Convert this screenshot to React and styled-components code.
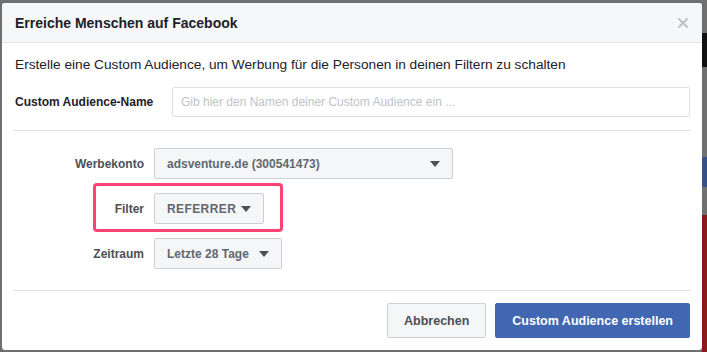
import React from 'react';
import styled, { createGlobalStyle } from 'styled-components';

const GlobalStyle = createGlobalStyle`
  html, body {
    margin: 0;
    padding: 0;
    background: #6f6f6f;
    font-family: "Liberation Sans", Arial, sans-serif;
  }
`;

const Page = styled.div`
  display: flex;
  width: 707px;
  height: 352px;
  overflow: hidden;
`;

const Dialog = styled.div`
  margin: 3px 0 2px 2px;
  width: 700px;
  height: 347px;
  background: #fff;
  border-radius: 3px;
  overflow: hidden;
  display: flex;
  flex-direction: column;
`;

const SideStrip = styled.div`
  flex: 1;
  display: flex;
  flex-direction: column;
`;

const StripBlock = styled.div`
  height: ${(p) => p.h}px;
  background: ${(p) => p.bg};
`;

const Header = styled.div`
  height: 39px;
  background: #f6f7f9;
  border-bottom: 1px solid #e5e5e5;
  display: flex;
  align-items: center;
  justify-content: space-between;
  padding: 0 13px 0 13px;
`;

const Title = styled.h1`
  margin: 0;
  font-size: 14px;
  font-weight: bold;
  color: #1d2129;
`;

const Close = styled.button`
  border: 0;
  background: none;
  padding: 0;
  width: 10px;
  height: 10px;
  display: flex;
  margin-right: 1px;
`;

const Body = styled.div`
  padding: 13px 12px 0 12px;
  flex: 1;
  display: flex;
  flex-direction: column;
`;

const Intro = styled.p`
  margin: 0 0 0 1px;
  font-size: 13.7px;
  line-height: 18px;
  color: #1d2129;
`;

const NameRow = styled.div`
  display: flex;
  align-items: center;
  margin-top: 13px;
  padding-left: 1px;
`;

const NameLabel = styled.label`
  width: 157px;
  font-size: 12px;
  font-weight: bold;
  color: #1d2129;
`;

const NameInput = styled.input`
  flex: 1;
  height: 30px;
  box-sizing: border-box;
  border: 1px solid #dddfe2;
  border-radius: 2px;
  padding: 0 8px;
  font-family: inherit;
  font-size: 12px;
  color: #1d2129;
  &::placeholder {
    color: #bec3c9;
  }
`;

const Divider = styled.hr`
  margin: ${(p) => p.top}px 0 0 0;
  border: 0;
  border-top: 1px solid #dddfe2;
`;

const Fields = styled.div`
  display: flex;
  flex-direction: column;
  align-items: flex-start;
  margin-top: 17px;
`;

const FieldRow = styled.div`
  display: flex;
  align-items: center;
  gap: 10px;
  margin-top: ${(p) => p.top || 0}px;
`;

const Highlight = styled.div`
  display: flex;
  align-items: center;
  gap: 10px;
  margin: 4px 0 0 79px;
  padding: 7px 16px 5px 0;
  border: 3px solid #ff4272;
  border-radius: 4px;
`;

const FieldLabel = styled.label`
  width: ${(p) => p.w}px;
  text-align: right;
  font-size: 12px;
  font-weight: bold;
  color: #4b4f56;
`;

const Select = styled.div`
  width: ${(p) => p.w}px;
  height: 31px;
  box-sizing: border-box;
  display: flex;
  align-items: center;
  justify-content: space-between;
  padding: 0 12px 0 12px;
  background: #f5f6f7;
  border: 1px solid #ccd0d5;
  border-radius: 2px;
  font-size: 12px;
  font-weight: bold;
  color: #606770;
  letter-spacing: ${(p) => (p.caps ? '0.4px' : '0')};
`;

const Caret = styled.span`
  width: 0;
  height: 0;
  border-left: 5px solid transparent;
  border-right: 5px solid transparent;
  border-top: 6px solid #4b4f56;
  margin-top: 1px;
`;

const Footer = styled.div`
  display: flex;
  justify-content: flex-end;
  gap: 9px;
  margin-top: 12px;
`;

const Button = styled.button`
  height: 35px;
  box-sizing: border-box;
  padding: 0 ${(p) => p.pad}px;
  border-radius: 2px;
  font-family: inherit;
  font-size: 12.5px;
  font-weight: bold;
  border: 1px solid ${(p) => (p.primary ? '#4267b2' : '#ccd0d5')};
  background: ${(p) => (p.primary ? '#4267b2' : '#f5f6f7')};
  color: ${(p) => (p.primary ? '#fff' : '#4b4f56')};
`;

const CloseIcon = () => (
  <svg width="10" height="10" viewBox="0 0 10 10">
    <path d="M1 1 L9 9 M9 1 L1 9" stroke="#bec3c9" strokeWidth="2.2" strokeLinecap="square" />
  </svg>
);

const App = () => (
  <>
    <GlobalStyle />
    <Page>
      <Dialog>
        <Header>
          <Title>Erreiche Menschen auf Facebook</Title>
          <Close aria-label="Schließen">
            <CloseIcon />
          </Close>
        </Header>
        <Body>
          <Intro>Erstelle eine Custom Audience, um Werbung für die Personen in deinen Filtern zu schalten</Intro>
          <NameRow>
            <NameLabel>Custom Audience-Name</NameLabel>
            <NameInput placeholder="Gib hier den Namen deiner Custom Audience ein ..." />
          </NameRow>
          <Divider top={13} />
          <Fields>
            <FieldRow>
              <FieldLabel w={130}>Werbekonto</FieldLabel>
              <Select w={299}>
                adsventure.de (300541473)
                <Caret />
              </Select>
            </FieldRow>
            <Highlight>
              <FieldLabel w={48}>Filter</FieldLabel>
              <Select w={110} caps>
                REFERRER
                <Caret />
              </Select>
            </Highlight>
            <FieldRow top={6}>
              <FieldLabel w={130}>Zeitraum</FieldLabel>
              <Select w={128}>
                Letzte 28 Tage
                <Caret />
              </Select>
            </FieldRow>
          </Fields>
          <Divider top={21} />
          <Footer>
            <Button pad={16}>Abbrechen</Button>
            <Button primary pad={16}>Custom Audience erstellen</Button>
          </Footer>
        </Body>
      </Dialog>
      <SideStrip>
        <StripBlock h={33} bg="#6f6f6f" />
        <StripBlock h={34} bg="#111" />
        <StripBlock h={90} bg="#707070" />
        <StripBlock h={30} bg="#35538a" />
        <StripBlock h={28} bg="#707070" />
        <StripBlock h={137} bg="#8a1a1a" />
      </SideStrip>
    </Page>
  </>
);

export default App;
